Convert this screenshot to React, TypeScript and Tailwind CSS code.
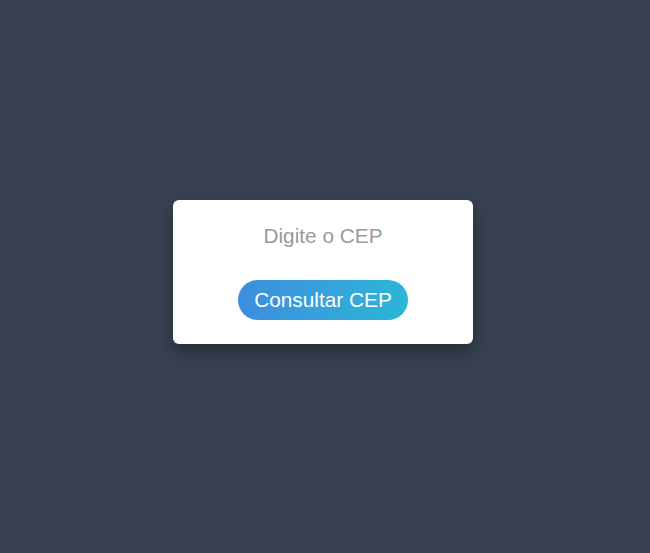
export default function App() {
  return (
    <div className="min-h-screen w-full bg-[#374151] flex items-center justify-center pr-1 pb-[10px] font-['Liberation_Sans',Arial,sans-serif]">
      <div className="w-[300px] bg-white rounded-[6px] shadow-[0_8px_16px_rgba(0,0,0,0.3)] px-5 pt-5 pb-6 flex flex-col items-center gap-7">
        <input
          type="text"
          placeholder="Digite o CEP"
          className="w-full h-8 text-center text-[1.3rem] text-gray-700 placeholder:text-[#9a9a9a] outline-none bg-transparent"
        />
        <button className="h-10 px-4 rounded-full text-white text-[1.3rem] bg-gradient-to-r from-[#3d8ddd] to-[#2bb6d7]">
          Consultar CEP
        </button>
      </div>
    </div>
  );
}
